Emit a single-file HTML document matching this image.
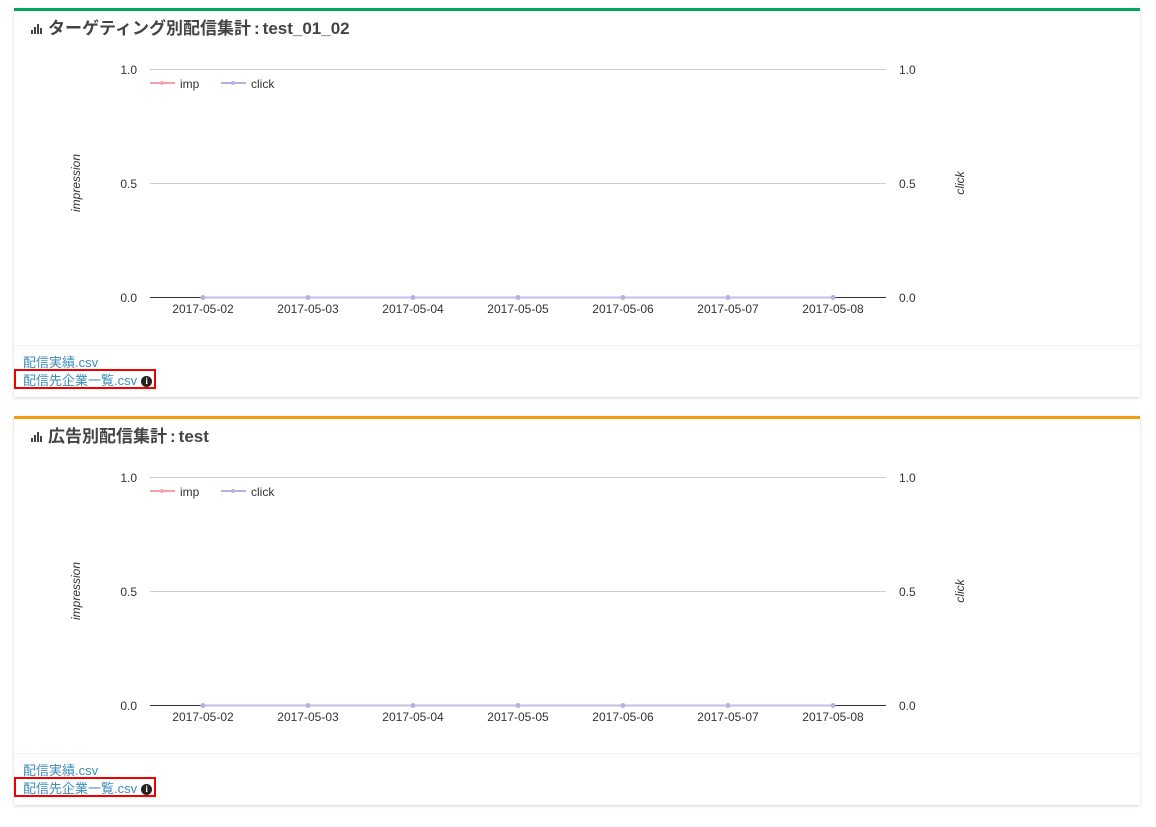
<!DOCTYPE html>
<html><head><meta charset="utf-8"><style>
body{margin:0;background:#fff;font-family:"Liberation Sans","Noto Sans CJK JP",sans-serif;width:1156px;height:827px;position:relative;overflow:hidden}
.card{position:absolute;left:14px;width:1126px;height:389px;background:#fff;box-shadow:0 1px 3px rgba(0,0,0,.18);border-top:3px solid #00a65a;box-sizing:border-box}
.title{position:absolute;left:17px;top:3px;font-size:17px;font-weight:bold;color:#444;white-space:nowrap}
.ico{display:inline-block;width:12px;height:10px;position:relative;margin-right:5px}
.ico i{position:absolute;bottom:0;width:2px;background:#444}
.foot{position:absolute;left:0;right:0;top:334px;border-top:1px solid #f0f0f0;height:52px}
.l1,.l2{position:absolute;left:9px;font-size:13px;color:#3c8dbc;white-space:nowrap}
.l1{top:6px}.l2{top:24px}
.box{position:absolute;left:0;top:23px;width:142px;height:20px;border:2px solid #e00;box-sizing:border-box}
.info{display:inline-block;width:11px;height:11px;border-radius:50%;background:#222;color:#fff;font-size:9px;font-weight:bold;text-align:center;line-height:11px;margin-left:4px;vertical-align:1px;font-family:"Liberation Serif",serif}
.c{margin:0 3px}
svg{position:absolute;left:-14px;top:-11px}
svg text{font-family:"Liberation Sans",sans-serif;font-size:12px;fill:#333}
</style></head><body>

<div class="card" style="top:8px">
<div class="title"><span class="ico"><i style="left:0;height:4px"></i><i style="left:3px;height:7px"></i><i style="left:6px;height:10px"></i><i style="left:9px;height:6px"></i></span>ターゲティング別配信集計<span class="c">:</span>test_01_02</div>
<svg width="1156" height="340">
<line x1="150" y1="69.5" x2="886" y2="69.5" stroke="#ccc"/>
<line x1="150" y1="183.5" x2="886" y2="183.5" stroke="#ccc"/>
<line x1="150" y1="297.5" x2="886" y2="297.5" stroke="#333"/>
<line x1="203" y1="297.5" x2="833" y2="297.5" stroke="#c8bde8" stroke-width="2"/>
<g fill="#b8b0e0"><circle cx="203" cy="297.5" r="2.5"/><circle cx="308" cy="297.5" r="2.5"/><circle cx="413" cy="297.5" r="2.5"/><circle cx="518" cy="297.5" r="2.5"/><circle cx="623" cy="297.5" r="2.5"/><circle cx="728" cy="297.5" r="2.5"/><circle cx="833" cy="297.5" r="2.5"/></g>
<text x="137" y="74" text-anchor="end">1.0</text><text x="137" y="188" text-anchor="end">0.5</text><text x="137" y="302" text-anchor="end">0.0</text>
<text x="899" y="74">1.0</text><text x="899" y="188">0.5</text><text x="899" y="302">0.0</text>
<g text-anchor="middle"><text x="203" y="313">2017-05-02</text><text x="308" y="313">2017-05-03</text><text x="413" y="313">2017-05-04</text><text x="518" y="313">2017-05-05</text><text x="623" y="313">2017-05-06</text><text x="728" y="313">2017-05-07</text><text x="833" y="313">2017-05-08</text></g>
<text transform="translate(80,183) rotate(-90)" text-anchor="middle" font-style="italic">impression</text>
<text transform="translate(964,183) rotate(-90)" text-anchor="middle" font-style="italic">click</text>
<line x1="150" y1="83" x2="175" y2="83" stroke="#f4a0a8" stroke-width="2"/><circle cx="162" cy="83" r="2" fill="#f4a0a8"/><text x="180" y="88">imp</text>
<line x1="221" y1="83" x2="246" y2="83" stroke="#b8b0e0" stroke-width="2"/><circle cx="233" cy="83" r="2" fill="#b8b0e0"/><text x="251" y="88">click</text>
</svg>
<div class="foot"><div class="box"></div><div class="l1">配信実績.csv</div><div class="l2">配信先企業一覧.csv<span class="info">i</span></div></div>
</div>

<div class="card" style="top:416px;border-top-color:#f39c12">
<div class="title"><span class="ico"><i style="left:0;height:4px"></i><i style="left:3px;height:7px"></i><i style="left:6px;height:10px"></i><i style="left:9px;height:6px"></i></span>広告別配信集計<span class="c">:</span>test</div>
<svg width="1156" height="340">
<line x1="150" y1="69.5" x2="886" y2="69.5" stroke="#ccc"/>
<line x1="150" y1="183.5" x2="886" y2="183.5" stroke="#ccc"/>
<line x1="150" y1="297.5" x2="886" y2="297.5" stroke="#333"/>
<line x1="203" y1="297.5" x2="833" y2="297.5" stroke="#c8bde8" stroke-width="2"/>
<g fill="#b8b0e0"><circle cx="203" cy="297.5" r="2.5"/><circle cx="308" cy="297.5" r="2.5"/><circle cx="413" cy="297.5" r="2.5"/><circle cx="518" cy="297.5" r="2.5"/><circle cx="623" cy="297.5" r="2.5"/><circle cx="728" cy="297.5" r="2.5"/><circle cx="833" cy="297.5" r="2.5"/></g>
<text x="137" y="74" text-anchor="end">1.0</text><text x="137" y="188" text-anchor="end">0.5</text><text x="137" y="302" text-anchor="end">0.0</text>
<text x="899" y="74">1.0</text><text x="899" y="188">0.5</text><text x="899" y="302">0.0</text>
<g text-anchor="middle"><text x="203" y="313">2017-05-02</text><text x="308" y="313">2017-05-03</text><text x="413" y="313">2017-05-04</text><text x="518" y="313">2017-05-05</text><text x="623" y="313">2017-05-06</text><text x="728" y="313">2017-05-07</text><text x="833" y="313">2017-05-08</text></g>
<text transform="translate(80,183) rotate(-90)" text-anchor="middle" font-style="italic">impression</text>
<text transform="translate(964,183) rotate(-90)" text-anchor="middle" font-style="italic">click</text>
<line x1="150" y1="83" x2="175" y2="83" stroke="#f4a0a8" stroke-width="2"/><circle cx="162" cy="83" r="2" fill="#f4a0a8"/><text x="180" y="88">imp</text>
<line x1="221" y1="83" x2="246" y2="83" stroke="#b8b0e0" stroke-width="2"/><circle cx="233" cy="83" r="2" fill="#b8b0e0"/><text x="251" y="88">click</text>
</svg>
<div class="foot"><div class="box"></div><div class="l1">配信実績.csv</div><div class="l2">配信先企業一覧.csv<span class="info">i</span></div></div>
</div>

</body></html>
